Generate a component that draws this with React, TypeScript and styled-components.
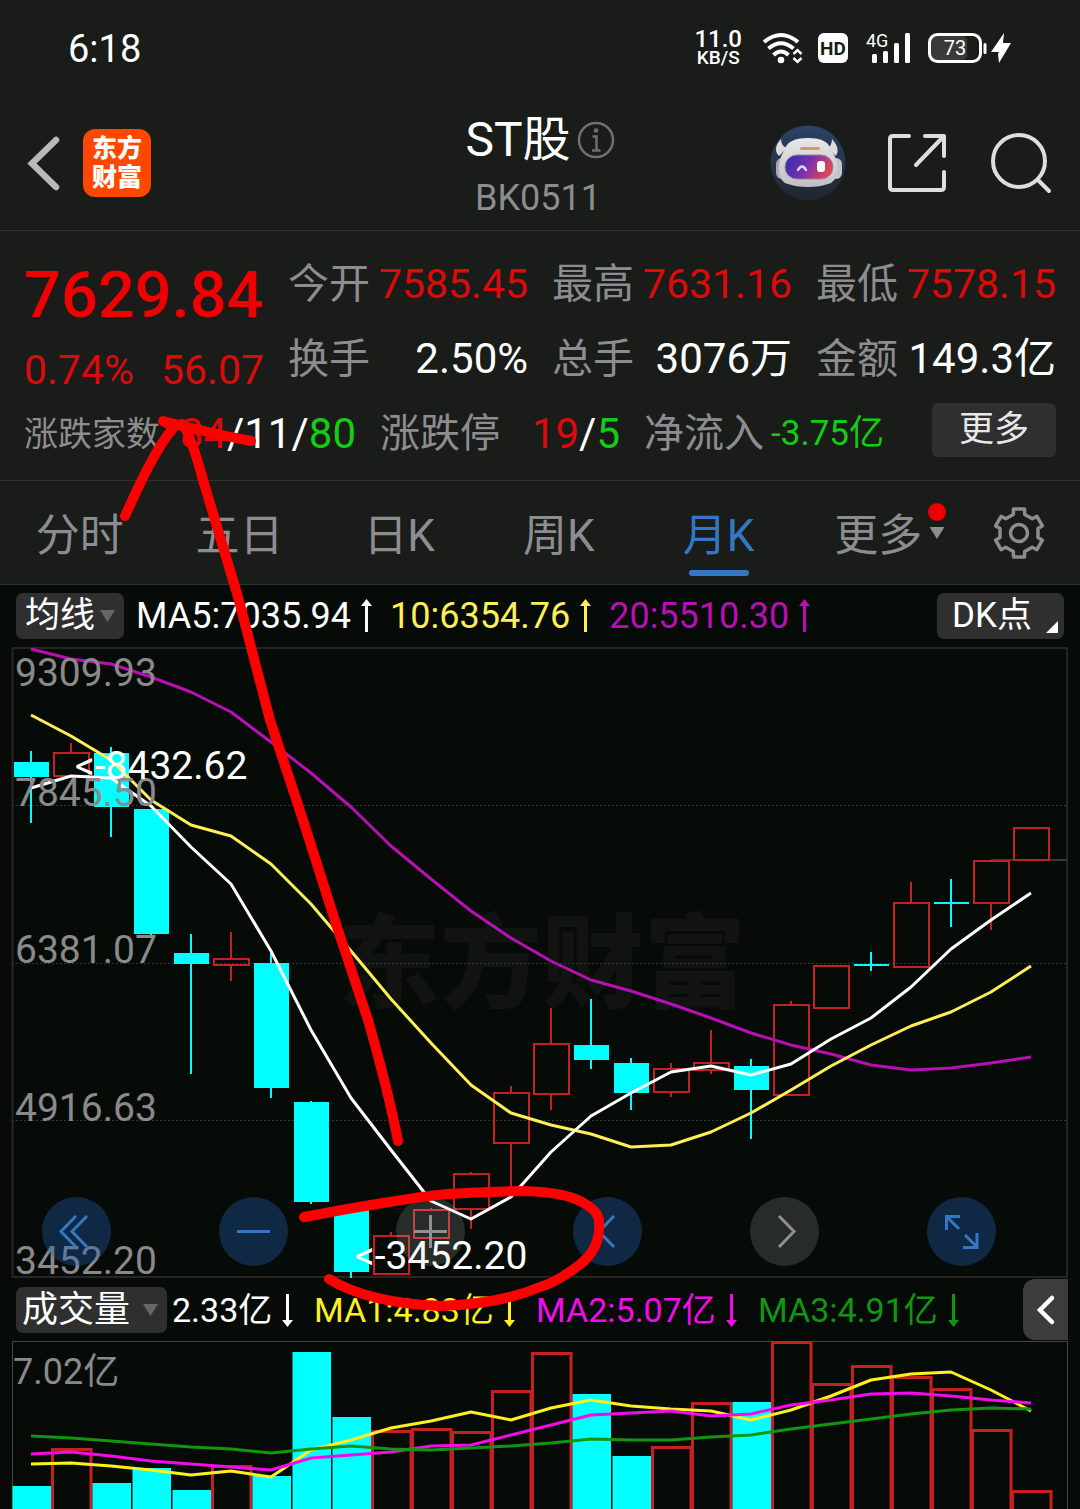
import React from "react";
import styled, { createGlobalStyle } from "styled-components";

const c = {
  panel: "#191c19",
  chart: "#070b08",
  line: "#303230",
  label: "#8c8c91",
  red: "#dc0a0a",
  green: "#14cc14",
  blue: "#3577c3",
  white: "#ffffff",
  chip: "#2f2f30",
  ma10: "#ffef56",
  ma20: "#b80fb5",
  cyan: "#00ffff",
  candleRed: "#c42222",
  volYellow: "#fff01e",
  volPink: "#f20cea",
  volGreen: "#129612",
};

const Global = createGlobalStyle`
  * { box-sizing: border-box; }
  html, body { margin: 0; background: ${c.chart}; }
  body { font-family: Roboto, "Noto Sans CJK SC", sans-serif; color: ${c.white}; }
  button { font: inherit; color: inherit; border: 0; padding: 0; margin: 0; background: none; cursor: pointer; }
  svg { display: block; flex: none; }
`;

const Page = styled.main`
  position: relative;
  overflow: hidden;
`;

/* ---------- status bar ---------- */

const StatusBar = styled.div`
  height: 96px;
  padding: 0 68px;
  display: flex;
  align-items: center;
  justify-content: space-between;
  background: ${c.panel};
`;
const Clock = styled.time`
  padding-top: 2px;
  font-size: 38px;
  line-height: 44px;
`;
const StatusIcons = styled.div`
  display: flex;
  align-items: center;
  gap: 20px;
`;
const NetSpeed = styled.div`
  display: flex;
  flex-direction: column;
  align-items: center;
  font-weight: 500;
  font-size: 24px;
  line-height: 20px;
  small {
    font-size: 19px;
    line-height: 18px;
  }
`;

/* ---------- header ---------- */

const Header = styled.header`
  height: 134px;
  padding: 0 28px 0 24px;
  display: grid;
  grid-template-columns: 1fr auto 1fr;
  align-items: center;
  background: ${c.panel};
`;
const HeaderLeft = styled.div`
  display: flex;
  align-items: center;
  gap: 20px;
`;
const HeaderRight = styled.div`
  display: flex;
  align-items: center;
  justify-content: flex-end;
  gap: 42px;
`;
const IconButton = styled.button`
  display: flex;
  align-items: center;
  justify-content: center;
`;
const Logo = styled.div`
  width: 68px;
  height: 68px;
  border-radius: 12px;
  background: #ff4700;
  display: flex;
  flex-direction: column;
  align-items: center;
  justify-content: center;
  font-weight: 900;
  font-size: 25px;
  line-height: 29px;
`;
const TitleBlock = styled.div`
  display: flex;
  flex-direction: column;
  align-items: center;
  padding-top: 12px;
`;
const Title = styled.h1`
  margin: 0;
  padding-left: 4px;
  display: flex;
  align-items: center;
  gap: 6px;
  font-weight: 400;
  font-size: 48px;
  line-height: 58px;
`;
const Code = styled.div`
  font-size: 36px;
  line-height: 58px;
  color: ${c.label};
`;

/* ---------- quote ---------- */

const Quote = styled.section`
  height: 250px;
  padding: 15px 24px 0;
  border-top: 1px solid ${c.line};
  background: ${c.panel};
`;
const QuoteGrid = styled.div`
  display: grid;
  grid-template-columns: repeat(4, minmax(0, 1fr));
  grid-template-rows: 75px 75px;
  column-gap: 24px;
  align-items: center;
`;
const PriceCell = styled.div`
  grid-row: span 2;
  align-self: start;
  padding-top: 10px;
`;
const Price = styled.div`
  font-weight: 500;
  font-size: 65px;
  line-height: 78px;
  color: #f00000;
`;
const Pair = styled.div`
  display: flex;
  align-items: center;
  justify-content: space-between;
  white-space: nowrap;
`;
const Change = styled(Pair)`
  margin-top: 12px;
  font-size: 41px;
  line-height: 48px;
  color: ${c.red};
`;
const Label = styled.span<{ $size?: number }>`
  font-size: ${(p) => p.$size ?? 41}px;
  line-height: 60px;
  color: ${c.label};
`;
const Value = styled.span<{ $color?: string; $size?: number }>`
  font-size: ${(p) => p.$size ?? 41}px;
  line-height: 60px;
  color: ${(p) => p.$color ?? c.white};
`;
const BreadthRow = styled.div`
  height: 75px;
  display: grid;
  grid-template-columns: 332fr 240fr 240fr 148fr;
  column-gap: 24px;
  align-items: center;
`;
const MoreButton = styled.button`
  justify-self: end;
  width: 124px;
  height: 54px;
  margin-bottom: 8px;
  border-radius: 6px;
  background: ${c.chip};
  color: #e8e8e8;
  font-size: 35px;
  line-height: 54px;
`;

/* ---------- tabs ---------- */

const Tabs = styled.nav`
  height: 104px;
  display: flex;
  border-top: 1px solid ${c.line};
  background: ${c.panel};
`;
const Tab = styled.button<{ $active?: boolean }>`
  position: relative;
  flex: 1;
  padding-top: 6px;
  font-size: 44px;
  line-height: 60px;
  color: ${(p) => (p.$active ? c.blue : c.label)};
  &::after {
    content: "";
    display: ${(p) => (p.$active ? "block" : "none")};
    position: absolute;
    left: 50%;
    bottom: 8px;
    width: 60px;
    height: 6px;
    margin-left: -30px;
    border-radius: 3px;
    background: ${c.blue};
  }
`;
const TabBadge = styled.svg`
  position: absolute;
  top: 21px;
  right: 12px;
`;
const GearButton = styled(IconButton)`
  width: 122px;
`;

/* ---------- indicator rows ---------- */

const IndicatorRow = styled.div<{ $line?: boolean }>`
  height: 63px;
  padding-left: 16px;
  display: flex;
  align-items: center;
  border-top: ${(p) => (p.$line ? `1px solid ${c.line}` : "0")};
`;
const Chip = styled.button`
  height: 46px;
  padding: 0 9px;
  display: flex;
  align-items: center;
  gap: 5px;
  border-radius: 7px;
  background: ${c.chip};
  font-size: 35px;
  line-height: 46px;
`;
const VolumeChip = styled(Chip)`
  padding: 0 9px 0 6px;
  gap: 13px;
  font-size: 36px;
`;
const DkChip = styled(Chip)`
  margin-left: auto;
  margin-right: 16px;
  padding: 0 6px 0 15px;
  gap: 14px;
`;
const Readouts = styled.div<{ $gap: number; $start: number }>`
  display: flex;
  align-items: center;
  gap: ${(p) => p.$gap}px;
  margin-left: ${(p) => p.$start}px;
`;
const Readout = styled.span<{ $color: string; $size: number; $width?: number }>`
  display: flex;
  align-items: center;
  justify-content: space-between;
  gap: 10px;
  width: ${(p) => (p.$width ? `${p.$width}px` : "auto")};
  color: ${(p) => p.$color};
  font-size: ${(p) => p.$size}px;
  line-height: 46px;
  white-space: nowrap;
`;
const DrawerButton = styled(IconButton)`
  margin-left: auto;
  margin-right: 12px;
  width: 45px;
  height: 61px;
  border-radius: 12px 0 0 12px;
  background: #3b3c3b;
`;

/* ---------- charts ---------- */

const ChartArea = styled.div`
  position: relative;
  padding: 0 12px;
`;
const ChartSvg = styled.svg`
  width: 100%;
  height: auto;
  overflow: visible;
  font-family: Roboto, "Noto Sans CJK SC", sans-serif;
`;
const NavButtons = styled.div`
  position: absolute;
  left: 42px;
  right: 84px;
  bottom: 12px;
  display: flex;
  justify-content: space-between;
`;
const NavButton = styled(IconButton)<{ $muted?: boolean }>`
  width: 69px;
  height: 69px;
  border-radius: 50%;
  color: ${(p) => (p.$muted ? "#8f8f94" : c.blue)};
  background: ${(p) => (p.$muted ? "rgba(220,220,220,.16)" : "rgba(30,94,176,.36)")};
`;
const Markup = styled.svg`
  position: absolute;
  left: 0;
  top: 0;
  width: 100%;
  height: auto;
  pointer-events: none;
`;

/* ---------- data ---------- */

type Candle = [up: boolean, top: number, bottom: number, high: number, low: number];
const candles: Candle[] = [
  [false, 762, 777, 751, 823],
  [true, 752, 777, 743, 777],
  [false, 753, 807, 747, 837],
  [false, 809, 934, 809, 935],
  [false, 953, 964, 934, 1074],
  [true, 958, 966, 932, 981],
  [false, 963, 1088, 951, 1098],
  [false, 1102, 1202, 1101, 1204],
  [false, 1210, 1272, 1210, 1278],
  [true, 1235, 1275, 1232, 1275],
  [true, 1209, 1239, 1208, 1239],
  [true, 1173, 1210, 1172, 1229],
  [true, 1092, 1144, 1086, 1196],
  [true, 1043, 1095, 1008, 1110],
  [false, 1045, 1060, 999, 1069],
  [false, 1063, 1093, 1058, 1110],
  [true, 1068, 1093, 1063, 1097],
  [true, 1062, 1071, 1030, 1074],
  [false, 1066, 1090, 1059, 1139],
  [true, 1004, 1096, 1001, 1096],
  [true, 965, 1009, 965, 1009],
  [false, 964, 966, 952, 971],
  [true, 902, 968, 882, 968],
  [false, 902, 904, 879, 927],
  [true, 860, 904, 860, 930],
  [true, 827, 861, 827, 861],
];
const ma5 = [788, 776, 778, 806, 847, 884, 951, 1030, 1098, 1150, 1201, 1219, 1197, 1152, 1116, 1093, 1072, 1066, 1075, 1064, 1039, 1018, 987, 949, 920, 893];
const ma10 = [715, 736, 760, 800, 825, 836, 864, 904, 951, 999, 1043, 1085, 1113, 1125, 1134, 1147, 1145, 1132, 1113, 1090, 1066, 1045, 1026, 1012, 992, 966];
const ma20 = [649, 659, 664, 677, 692, 712, 742, 773, 807, 846, 879, 911, 938, 961, 980, 991, 1004, 1018, 1033, 1045, 1054, 1065, 1070, 1068, 1063, 1057];

const volumes: [up: boolean, top: number][] = [
  [false, 1486], [true, 1448], [false, 1483], [false, 1468], [false, 1490], [true, 1465],
  [false, 1476], [false, 1352], [false, 1417], [true, 1430], [true, 1428], [true, 1431],
  [true, 1390], [true, 1352], [false, 1394], [false, 1456], [true, 1446], [true, 1402],
  [false, 1402], [true, 1341], [true, 1383], [true, 1365], [true, 1376], [true, 1388],
  [true, 1429], [true, 1490],
];
const vol1 = [1464, 1463, 1466, 1470, 1475, 1471, 1477, 1450, 1440, 1428, 1421, 1412, 1420, 1408, 1400, 1406, 1409, 1411, 1420, 1410, 1396, 1380, 1374, 1372, 1390, 1411];
const vol2 = [1454, 1452, 1456, 1461, 1464, 1467, 1470, 1458, 1455, 1452, 1446, 1445, 1435, 1425, 1415, 1413, 1411, 1416, 1414, 1405, 1400, 1394, 1393, 1396, 1400, 1403];
const vol3 = [1436, 1438, 1441, 1444, 1447, 1449, 1453, 1449, 1446, 1449, 1450, 1448, 1446, 1443, 1439, 1440, 1440, 1437, 1435, 1429, 1424, 1419, 1414, 1410, 1408, 1409];

const STEP = 40;
const points = (ys: number[]) => ys.map((y, i) => `${31 + STEP * i},${y}`).join(" ");

const Line = ({ ys, color }: { ys: number[]; color: string }) => (
  <polyline points={points(ys)} fill="none" stroke={color} strokeWidth="3" strokeLinejoin="round" />
);

/* ---------- small drawings ---------- */

const Arrow = ({ down }: { down?: boolean }) => (
  <svg width="11" height="34" viewBox="0 0 11 34" aria-hidden="true">
    <g transform={down ? "rotate(180 5.5 17)" : undefined} fill="currentColor">
      <path d="M5.5 0 11 7H0z" />
      <path d="M4 6h3v27H4z" />
    </g>
  </svg>
);
const Caret = ({ color = "#646864" }: { color?: string }) => (
  <svg width="15" height="12" viewBox="0 0 15 12" aria-hidden="true">
    <path d="M0 0h15L7.5 12z" fill={color} />
  </svg>
);

const gearPath = (() => {
  const out: string[] = [];
  for (let k = 0; k < 6; k++) {
    const base = k * 60 - 90;
    const at = (deg: number, r: number) => {
      const a = ((base + deg) * Math.PI) / 180;
      return `${(27 + r * Math.cos(a)).toFixed(1)} ${(27 + r * Math.sin(a)).toFixed(1)}`;
    };
    out.push(at(-13, 24.5), at(13, 24.5), at(17, 19.5), at(43, 19.5));
  }
  return `M${out.join("L")}Z`;
})();

const StatusGlyphs = () => (
  <svg width="250" height="34" viewBox="762 31 250 34" role="img" aria-label="Wi-Fi, HD, 4G, 73%">
    <g fill="none" stroke="#fff" strokeWidth="4">
      <path d="M764 42Q781 28 798 42" />
      <path d="M768.5 48.5Q781 38 793.5 48.5" />
      <path d="M773.5 55Q781 48 788.5 55" />
      <path d="M793.5 54l4-3.8 4 3.8M793.5 58l4 3.8 4-3.8" strokeWidth="2.5" />
    </g>
    <circle cx="781" cy="60" r="3.3" fill="#fff" />
    <rect x="818" y="33" width="30" height="30" rx="6" fill="#fff" />
    <text x="833" y="55" textAnchor="middle" fontSize="19" fontWeight="700" fill={c.panel} fontFamily="Roboto, sans-serif">HD</text>
    <text x="866" y="47" fontSize="18" fill="#fff" fontFamily="Roboto, sans-serif">4G</text>
    <g fill="#fff">
      <rect x="872" y="54" width="5" height="9" rx="1.5" />
      <rect x="883" y="51" width="5" height="12" rx="1.5" />
      <rect x="894" y="43" width="5" height="20" rx="1.5" />
      <rect x="905" y="33" width="5" height="30" rx="1.5" />
      <rect x="983.5" y="43" width="3" height="11" rx="1.5" />
      <path d="M1004 33 991 52h8l-1 2 1 9 12-20h-8z" />
    </g>
    <rect x="931" y="36" width="36" height="24" rx="5" fill="#3a3a3a" />
    <rect x="929.5" y="34.5" width="51" height="27" rx="8" fill="none" stroke="#fff" strokeWidth="3" />
    <text x="955" y="55" textAnchor="middle" fontSize="20" fill="#fff" fontFamily="Roboto, sans-serif">73</text>
  </svg>
);

const Robot = () => (
  <svg width="76" height="76" viewBox="0 0 76 76" aria-hidden="true">
    <defs>
      <linearGradient id="sky" x1="0" y1="0" x2="0" y2="1">
        <stop offset="0" stopColor="#2c4268" />
        <stop offset="1" stopColor="#20242f" />
      </linearGradient>
      <linearGradient id="visor" x1="0" y1="0" x2="1" y2="0.3">
        <stop offset="0" stopColor="#2a2fae" />
        <stop offset="0.55" stopColor="#7a2fae" />
        <stop offset="1" stopColor="#dd4458" />
      </linearGradient>
      <linearGradient id="shell" x1="0" y1="0" x2="0" y2="1">
        <stop offset="0" stopColor="#e9e7e9" />
        <stop offset="1" stopColor="#c2bec5" />
      </linearGradient>
    </defs>
    <circle cx="38" cy="38" r="37.5" fill="url(#sky)" />
    <path d="M11 14q-9 10-2 17l8-8q-6-2-6-9zM62 14q9 10 4 17l-9-8q5-2 5-9z" fill="#dedbe0" />
    <rect x="6" y="33" width="12" height="21" rx="6" fill="#a9a6b0" />
    <rect x="60" y="33" width="12" height="21" rx="6" fill="#c5c2c9" />
    <path d="M14 26Q17 13 38 13t23 13q8 8 6 21-1 10-9 12-8 3-20 3t-20-3q-8-2-9-12-1-13 5-21z" fill="url(#shell)" />
    <rect x="30" y="22" width="20" height="3" rx="1.5" fill="#d49a6c" />
    <rect x="15" y="30" width="48" height="24" rx="12" fill="url(#visor)" stroke="#8d86a4" strokeWidth="1" />
    <path d="M28 45q4-7 8 0" fill="none" stroke="#d9d6ff" strokeWidth="2.5" strokeLinecap="round" />
    <rect x="47" y="36" width="8" height="11" rx="3" fill="#fff" />
  </svg>
);

const navItems: { label: string; muted?: boolean; path: string }[] = [
  { label: "最早", path: "M34 19 19 34.5 34 50M45 19 30 34.5 45 50" },
  { label: "缩小", path: "M18 34.5h33" },
  { label: "放大", muted: true, path: "M18 34.5h33M34.5 18v33" },
  { label: "向左", path: "M41 19 26 34.5 41 50" },
  { label: "向右", muted: true, path: "M29 19l15 15.5L29 50" },
  { label: "全屏", path: "M19.5 33V19.5H33M20 20l12 12M50 36v14.5H36M50 50 38 38" },
];

const stats = [
  { label: "今开", value: "7585.45", color: c.red },
  { label: "最高", value: "7631.16", color: c.red },
  { label: "最低", value: "7578.15", color: c.red },
  { label: "换手", value: "2.50%", size: 42 },
  { label: "总手", value: "3076万", size: 42 },
  { label: "金额", value: "149.3亿", size: 42 },
];

const Tint = styled.span<{ $color: string }>`
  color: ${(p) => p.$color};
`;

export default function App() {
  return (
    <Page>
      <Global />

      <StatusBar>
        <Clock>6:18</Clock>
        <StatusIcons>
          <NetSpeed>
            <span>11.0</span>
            <small>KB/S</small>
          </NetSpeed>
          <StatusGlyphs />
        </StatusIcons>
      </StatusBar>

      <Header>
        <HeaderLeft>
          <IconButton aria-label="返回">
            <svg width="39" height="56" viewBox="0 0 39 56">
              <path d="M32 5 8 28.5 32 52" fill="none" stroke="#b9b9b9" strokeWidth="6.5" strokeLinecap="round" />
            </svg>
          </IconButton>
          <Logo>
            <span>东方</span>
            <span>财富</span>
          </Logo>
        </HeaderLeft>
        <TitleBlock>
          <Title>
            ST股
            <svg width="38" height="38" viewBox="0 0 38 38" aria-hidden="true">
              <g fill="none" stroke="#6e6f6e" strokeWidth="2.5">
                <circle cx="19" cy="19" r="17" />
                <path d="M15.5 15.5h4V29M15 29.5h8.5" />
              </g>
              <circle cx="19" cy="9.5" r="2.3" fill="#6e6f6e" />
            </svg>
          </Title>
          <Code>BK0511</Code>
        </TitleBlock>
        <HeaderRight>
          <IconButton aria-label="智能助手">
            <Robot />
          </IconButton>
          <IconButton aria-label="分享">
            <svg width="60" height="60" viewBox="1 0 60 60" fill="none" stroke="#dedede" strokeWidth="4" strokeLinecap="round" strokeLinejoin="round">
              <path d="M22 3H6q-3 0-3 3v48q0 3 3 3h48q3 0 3-3V39" />
              <path d="M38 3h19v20M57 3 29 32" />
            </svg>
          </IconButton>
          <IconButton aria-label="搜索">
            <svg width="62" height="62" viewBox="0 0 62 62" fill="none" stroke="#dedede" strokeWidth="4" strokeLinecap="round">
              <circle cx="29" cy="29" r="26" />
              <path d="M48 48l11 11" />
            </svg>
          </IconButton>
        </HeaderRight>
      </Header>

      <Quote>
        <QuoteGrid>
          <PriceCell>
            <Price>7629.84</Price>
            <Change>
              <span>0.74%</span>
              <span>56.07</span>
            </Change>
          </PriceCell>
          {stats.map((s) => (
            <Pair key={s.label}>
              <Label>{s.label}</Label>
              <Value $color={s.color} $size={s.size}>{s.value}</Value>
            </Pair>
          ))}
        </QuoteGrid>
        <BreadthRow>
          <Pair>
            <Label $size={34}>涨跌家数</Label>
            <Value $size={42}>
              <Tint $color={c.red}>84</Tint>/11/<Tint $color={c.green}>80</Tint>
            </Value>
          </Pair>
          <Pair>
            <Label $size={40}>涨跌停</Label>
            <Value $size={42}>
              <Tint $color={c.red}>19</Tint>/<Tint $color={c.green}>5</Tint>
            </Value>
          </Pair>
          <Pair>
            <Label $size={40}>净流入</Label>
            <Value $size={35} $color={c.green}>-3.75亿</Value>
          </Pair>
          <MoreButton>更多</MoreButton>
        </BreadthRow>
      </Quote>

      <Tabs>
        <Tab>分时</Tab>
        <Tab>五日</Tab>
        <Tab>日K</Tab>
        <Tab>周K</Tab>
        <Tab $active>月K</Tab>
        <Tab>
          更多
          <TabBadge width="18" height="38" viewBox="0 0 18 38" aria-hidden="true">
            <circle cx="9" cy="10" r="9" fill="#ee0000" />
            <path d="M1.5 25h15L9 37z" fill={c.label} />
          </TabBadge>
        </Tab>
        <GearButton aria-label="设置">
          <svg width="54" height="54" viewBox="0 0 54 54" fill="none" stroke={c.label} strokeWidth="3.5" strokeLinejoin="round">
            <path d={gearPath} />
            <circle cx="27" cy="27" r="8.5" />
          </svg>
        </GearButton>
      </Tabs>

      <IndicatorRow $line>
        <Chip>
          均线
          <Caret />
        </Chip>
        <Readouts $gap={18} $start={12}>
          <Readout $color={c.white} $size={36}>MA5:7035.94<Arrow /></Readout>
          <Readout $color={c.ma10} $size={36}>10:6354.76<Arrow /></Readout>
          <Readout $color={c.ma20} $size={36}>20:5510.30<Arrow /></Readout>
        </Readouts>
        <DkChip>
          DK点
          <svg width="12" height="34" viewBox="0 0 12 34" aria-hidden="true">
            <path d="M12 22v12H0z" fill="#fff" />
          </svg>
        </DkChip>
      </IndicatorRow>

      <ChartArea>
        <ChartSvg viewBox="12 647 1056 631" role="img" aria-label="月K">
          <text x="338" y="1000" fontSize="102" fontWeight="900" fill="#101310">东方财富</text>
          <rect x="12.5" y="648" width="1054.5" height="629" fill="none" stroke="#242624" strokeWidth="2" />
          {[805.5, 963.5, 1120.5].map((y) => (
            <path key={y} d={`M12 ${y}H1067`} stroke="#343634" strokeDasharray="2 2" />
          ))}
          <path d="M991 860H1067" stroke="#3a3a3a" strokeWidth="2" />
          {candles.map(([up, top, bottom, high, low], i) => {
            const x = 31.5 + STEP * i;
            return up ? (
              <g key={i} stroke={c.candleRed} strokeWidth="2" fill="none">
                <path d={`M${x - 0.5} ${high}V${top}M${x - 0.5} ${bottom}V${low}`} />
                <rect x={x - 17.5} y={top + 1} width="35" height={bottom - top - 2} />
              </g>
            ) : (
              <g key={i} fill={c.cyan}>
                <rect x={x - 1.5} y={high} width="2" height={low - high} />
                <rect x={x - 17.5} y={top} width="35" height={bottom - top} />
              </g>
            );
          })}
          <Line ys={ma20} color={c.ma20} />
          <Line ys={ma10} color={c.ma10} />
          <Line ys={ma5} color={c.white} />
          <g fontSize="39" fill="#8b898c">
            <text x="15" y="686">9309.93</text>
            <text x="15" y="806">7845.50</text>
            <text x="15" y="963">6381.07</text>
            <text x="15" y="1121">4916.63</text>
            <text x="15" y="1274">3452.20</text>
          </g>
          <g fontSize="39" fill="#fff">
            <text x="75" y="779">&lt;-8432.62</text>
            <text x="355" y="1269">&lt;-3452.20</text>
          </g>
        </ChartSvg>
        <NavButtons>
          {navItems.map((n) => (
            <NavButton key={n.label} aria-label={n.label} $muted={n.muted}>
              <svg width="69" height="69" viewBox="0 0 69 69" fill="none" stroke="currentColor" strokeWidth="3">
                <path d={n.path} />
              </svg>
            </NavButton>
          ))}
        </NavButtons>
      </ChartArea>

      <IndicatorRow>
        <VolumeChip>
          成交量
          <Caret />
        </VolumeChip>
        <Readouts $gap={21} $start={5}>
          <Readout $color={c.white} $size={34} $width={121}>2.33亿<Arrow down /></Readout>
          <Readout $color={c.volYellow} $size={34} $width={201}>MA1:4.83亿<Arrow down /></Readout>
          <Readout $color={c.volPink} $size={34} $width={201}>MA2:5.07亿<Arrow down /></Readout>
          <Readout $color={c.volGreen} $size={34} $width={201}>MA3:4.91亿<Arrow down /></Readout>
        </Readouts>
        <DrawerButton aria-label="展开">
          <svg width="20" height="32" viewBox="0 0 20 32">
            <path d="M16 4 4 16l12 12" fill="none" stroke="#fff" strokeWidth="4.5" strokeLinecap="round" />
          </svg>
        </DrawerButton>
      </IndicatorRow>

      <ChartArea>
        <ChartSvg viewBox="12 1341 1056 168" role="img" aria-label="成交量">
          <path d="M12.5 1509V1341.5H1067.5V1509" fill="none" stroke="#454745" />
          {volumes.map(([up, top], i) =>
            up ? (
              <path key={i} d={`M${12.5 + STEP * i} 1512V${top + 1.5}H${51 + STEP * i}V1512`} fill="none" stroke={c.candleRed} strokeWidth="3" />
            ) : (
              <rect key={i} x={12.5 + STEP * i} y={top} width="38.5" height={1510 - top} fill={c.cyan} />
            )
          )}
          <Line ys={vol1} color={c.volYellow} />
          <Line ys={vol2} color={c.volPink} />
          <Line ys={vol3} color={c.volGreen} />
          <text x="13" y="1384" fontSize="36" fill="#8b898c">7.02亿</text>
        </ChartSvg>
      </ChartArea>

      <Markup viewBox="0 0 1080 1509" fill="none" stroke="#ff0000" strokeWidth="10" strokeLinecap="round" strokeLinejoin="round" aria-hidden="true">
        <path d="M125 516C140 483 156 448 174 427L163 421Q205 432 251 441" />
        <path d="M182 424Q190 432 203 480L238 597 270 720 302 817 337 927 368 1020Q388 1090 398 1141" />
        <path d="M304 1217Q345 1209 389 1202T448 1194T516 1191Q560 1191 580 1201T599 1223Q601 1249 578 1266T540 1287Q500 1304 441 1306Q368 1303 329 1279" />
      </Markup>
    </Page>
  );
}
